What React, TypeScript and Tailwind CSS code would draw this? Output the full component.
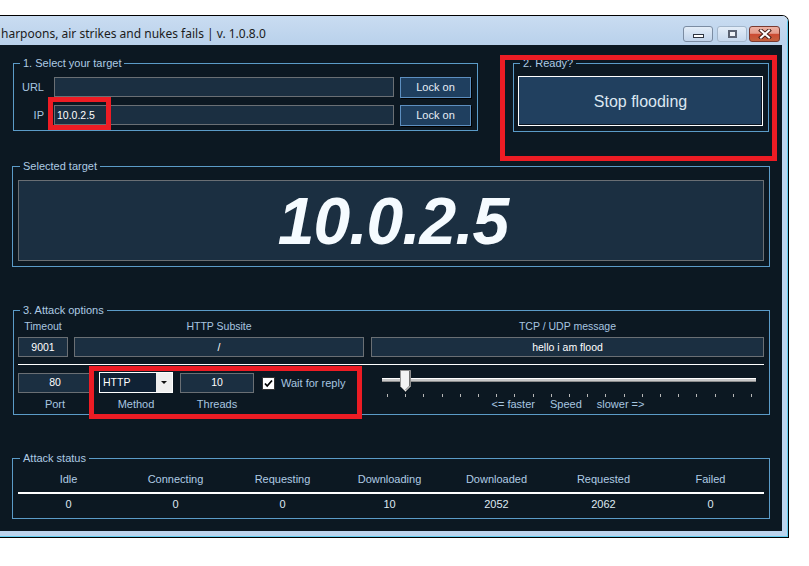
import type { ReactNode } from "react";

const BG = "bg-[#0c1822]";

function Group({ title, className, legendClass, children }: { title: string; className: string; legendClass: string; children: ReactNode }) {
    return (
        <div className={`flex flex-col border border-[#5b9bc8] ${className}`}>
            <span className={`-mt-[7px] w-fit ${BG} px-[3px] text-[11px] leading-[13px] text-[#aecbe4] ${legendClass}`}>{title}</span>
            {children}
        </div>
    );
}

function Field({ value, className = "", left = false }: { value: string; className?: string; left?: boolean }) {
    return (
        <div
            className={`flex h-[20px] shrink-0 items-center border border-[#6a6f74] bg-[#1b2f41] text-[10.5px] leading-[13px] text-white ${
                left ? "pl-[2px]" : "justify-center"
            } ${className}`}
        >
            {value}
        </div>
    );
}

function TargetRow({ label, value }: { label: string; value: string }) {
    return (
        <div className="flex h-[21px] items-center pt-px">
            <span className="w-[30px] text-right text-[11px] text-[#a8c6e0]">{label}</span>
            <Field value={value} left className="ml-[10px] w-[340px]" />
            <button className="ml-[6px] h-[21px] w-[71px] border border-[#5d8fc0] bg-[#1f3f5f] text-[11px] text-[#e6eef6] shadow-[1px_1px_0_#000]">
                Lock on
            </button>
        </div>
    );
}

function CaptionButtons() {
    return (
        <div className="ml-auto mt-[10px] flex items-start pr-[7px]">
            {/* minimize */}
            <div className="relative h-[16px] w-[30px] rounded-[3px] border border-[#7b8ca2] bg-gradient-to-b from-[#e3edf8] to-[#c0d3ea]">
                <div className="absolute left-[9px] top-[7px] h-[4px] w-[11px] border border-[#2e3440] bg-white" />
            </div>
            {/* maximize */}
            <div className="relative ml-[4px] h-[16px] w-[30px] rounded-[3px] border border-[#a3b6cb] bg-gradient-to-b from-[#e3edf8] to-[#c6d8ed]">
                <div className="absolute left-[10px] top-[3px] h-[8px] w-[9px] border-2 border-[#5a6272] bg-[#eef2f7]" />
            </div>
            {/* close */}
            <div className="ml-[2px] flex h-[16px] w-[31px] items-center justify-center rounded-[3px] border border-[#7a3a30] bg-[linear-gradient(to_bottom,#eeb2a4_0%,#e39c8c_45%,#cc4b33_52%,#c3623f_100%)]">
                <svg width="14" height="10" viewBox="0 0 14 10">
                    <path d="M3 1.5 L11 8.5 M11 1.5 L3 8.5" stroke="#4a1e18" strokeWidth="4" strokeLinecap="square" />
                    <path d="M3 1.5 L11 8.5 M11 1.5 L3 8.5" stroke="#ffffff" strokeWidth="2" strokeLinecap="square" />
                </svg>
            </div>
        </div>
    );
}

function Slider() {
    const ticks = Array.from({ length: 21 }, (_, i) => 5 + i * 18.2);
    return (
        <svg width="376" height="28" viewBox="0 0 376 28">
            <rect x="0" y="8" width="374" height="4" fill="#c9c9c9" />
            <rect x="0" y="8" width="374" height="1" fill="#ffffff" />
            <rect x="0" y="11" width="374" height="1" fill="#8c8c8c" />
            {ticks.map((x) => (
                <rect key={x} x={Math.round(x)} y="24" width="1" height="3" fill="#b8b8b8" />
            ))}
            <path d="M18.5 0.5 H28.5 V16.5 L23.5 21.5 L18.5 16.5 Z" fill="#f2f2f2" stroke="#8e8e8e" />
            <path d="M27.5 1 V16 L23.5 20" fill="none" stroke="#6e6e6e" />
        </svg>
    );
}

export default function App() {
    const statusCols = ["Idle", "Connecting", "Requesting", "Downloading", "Downloaded", "Requested", "Failed"];
    const statusVals = ["0", "0", "0", "10", "2052", "2062", "0"];

    return (
        <div className="relative h-[566px] w-[809px] overflow-hidden bg-white pt-[15px] font-['Liberation_Sans',Arial,sans-serif]">
            {/* Window */}
            <div className="w-[789px] overflow-hidden rounded-tr-[7px] border-b border-r border-t border-black">
                <div className="border-b border-r border-[#62cdf0] bg-[#bcd4ed]">
                    {/* Title bar */}
                    <div className="flex h-[29px] bg-gradient-to-b from-[#c9dcf1] to-[#b9d1eb]">
                        <span className="mt-[10px] whitespace-nowrap pl-[1px] font-['Noto_Sans',sans-serif] text-[12px] leading-[16px] text-[#1b1b1b]">
                            harpoons, air strikes and nukes fails | v. 1.0.8.0
                        </span>
                        <CaptionButtons />
                    </div>

                    {/* Client area */}
                    <div className={`mb-[5px] h-[486px] w-[782px] ${BG} pt-[18px] text-[#a8c6e0]`}>
                        <div className="flex items-start">
                            <Group title="1. Select your target" className="ml-[13px] h-[68px] w-[465px]" legendClass="ml-[6px]">
                                <div className="mt-[6px] flex flex-col gap-[7px]">
                                    <TargetRow label="URL" value="" />
                                    <TargetRow label="IP" value="10.0.2.5" />
                                </div>
                            </Group>
                            <Group title="2. Ready?" className="ml-[35px] h-[69px] w-[256px]" legendClass="ml-[6px]">
                                <button className="ml-[4px] mt-[6px] h-[50px] w-[245px] border border-white bg-[#21405f] pt-px text-[16px] text-[#dce7f1] shadow-[inset_-1px_-1px_0_#0a1420]">
                                    Stop flooding
                                </button>
                            </Group>
                        </div>

                        {/* Selected target */}
                        <Group title="Selected target" className="ml-[12px] mt-[34px] h-[101px] w-[758px]" legendClass="ml-[7px]">
                            <div className="ml-[5px] mt-[7px] flex h-[81px] w-[746px] items-center justify-center border border-[#6a6f74] bg-[#1b2f41]">
                                <span className="ml-[4px] text-[66px] font-bold italic leading-none tracking-[-1px] text-[#f5fbff]">10.0.2.5</span>
                            </div>
                        </Group>

                        {/* Attack options */}
                        <Group title="3. Attack options" className="ml-[13px] mt-[43px] h-[105px] w-[757px]" legendClass="ml-[6px]">
                            <div className="pl-[4px]">
                                <div className="mt-[3px] flex h-[13px] gap-[6px] text-[10.5px] leading-[13px]">
                                    <span className="w-[50px] text-center">Timeout</span>
                                    <span className="w-[290px] text-center">HTTP Subsite</span>
                                    <span className="ml-[1px] w-[393px] text-center">TCP / UDP message</span>
                                </div>
                                <div className="mt-[4px] flex gap-[6px]">
                                    <Field value="9001" className="w-[50px]" />
                                    <Field value="/" className="w-[290px]" />
                                    <Field value="hello i am flood" className="ml-[1px] w-[393px]" />
                                </div>
                                <div className="mt-[7px] h-px w-[746px] bg-white" />

                                <div className="mt-[5px] flex">
                                    <div className="w-[364px] pt-[2px]">
                                        <div className="flex h-[21px] items-center">
                                            <Field value="80" className="w-[74px]" />
                                            <div className="ml-[7px] flex h-[21px] w-[74px] border border-white bg-[#102235]">
                                                <span className="flex flex-1 items-center pl-[3px] text-[10.5px] text-white">HTTP</span>
                                                <span className="flex w-[16px] items-center justify-center bg-[#efefef]">
                                                    <svg width="6" height="3" viewBox="0 0 6 3">
                                                        <path d="M0 0 H6 L3 3 Z" fill="#111" />
                                                    </svg>
                                                </span>
                                            </div>
                                            <Field value="10" className="ml-[7px] w-[74px]" />
                                            <svg className="ml-[8px] mt-[2px]" width="13" height="13" viewBox="0 0 13 13">
                                                <rect x="0.5" y="0.5" width="12" height="12" fill="#fff" stroke="#333" />
                                                <path d="M3 6.5 L5.2 9 L10 3.5" fill="none" stroke="#000" strokeWidth="1.8" />
                                            </svg>
                                            <span className="ml-[6px] mt-[2px] text-[11px]">Wait for reply</span>
                                        </div>
                                        <div className="mt-[5px] flex h-[13px] gap-[7px] text-[11px] leading-[13px]">
                                            <span className="w-[74px] text-center">Port</span>
                                            <span className="w-[74px] text-center">Method</span>
                                            <span className="w-[74px] text-center">Threads</span>
                                        </div>
                                    </div>
                                    <div className="flex w-[376px] flex-col">
                                        <Slider />
                                        <div className="flex h-[13px] justify-center gap-[15px] pr-[4px] text-[11px] leading-[13px]">
                                            <span>&lt;= faster</span>
                                            <span>Speed</span>
                                            <span>slower =&gt;</span>
                                        </div>
                                    </div>
                                </div>
                            </div>
                        </Group>

                        {/* Attack status */}
                        <Group title="Attack status" className="ml-[12px] mt-[43px] h-[61px] w-[758px]" legendClass="ml-[7px]">
                            <div className="pl-[2px]">
                                <div className="mt-[8px] grid h-[13px] w-[749px] grid-cols-7 text-center text-[11px] leading-[13px] text-[#b0cce5]">
                                    {statusCols.map((c) => (
                                        <span key={c}>{c}</span>
                                    ))}
                                </div>
                                <div className="ml-[3px] mt-[6px] h-[2px] w-[746px] bg-white" />
                                <div className="mt-[4px] grid h-[13px] w-[749px] grid-cols-7 text-center text-[11px] leading-[13px] text-[#dfe9f2]">
                                    {statusVals.map((v, i) => (
                                        <span key={i}>{v}</span>
                                    ))}
                                </div>
                            </div>
                        </Group>
                    </div>
                </div>
            </div>

            {/* Red annotation frames */}
            <div className="absolute left-[48px] top-[97px] h-[33px] w-[63px] border-[5px] border-[#ed1c24]" />
            <div className="absolute left-[500px] top-[55px] h-[106px] w-[277px] border-[5px] border-[#ed1c24]" />
            <div className="absolute left-[89px] top-[366px] h-[53px] w-[273px] border-[5px] border-[#ed1c24]" />
        </div>
    );
}
